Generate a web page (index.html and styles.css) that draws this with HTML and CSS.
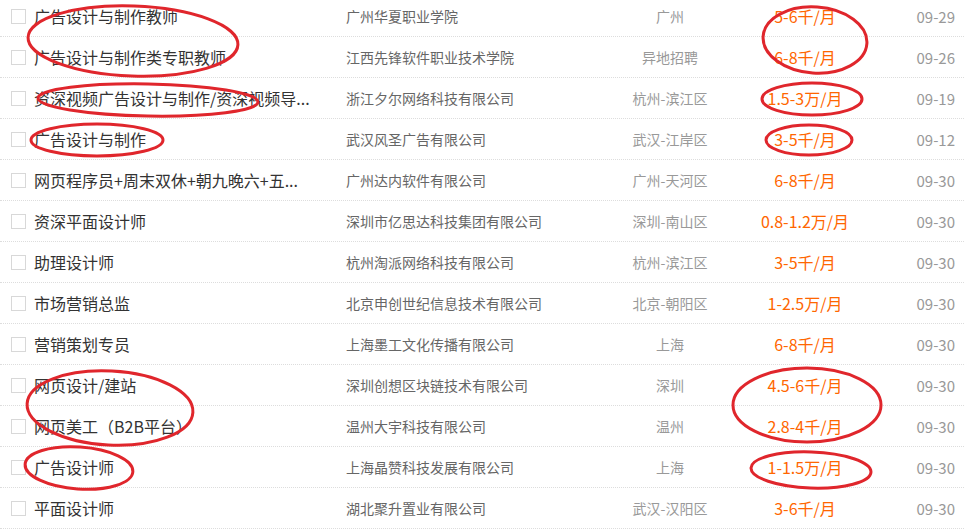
FILE: index.html
```html
<!DOCTYPE html>
<html lang="zh-CN">
<head>
    <meta charset="UTF-8">
    <title>职位列表</title>
    <link rel="stylesheet" href="styles.css">
</head>
<body>
    <div class="job-list">
        <div class="job-row">
            <span class="check"></span>
            <span class="job-title">广告设计与制作教师</span>
            <span class="company">广州华夏职业学院</span>
            <span class="place">广州</span>
            <span class="salary">5-6千/月</span>
            <span class="date">09-29</span>
        </div>
        <div class="job-row">
            <span class="check"></span>
            <span class="job-title">广告设计与制作类专职教师</span>
            <span class="company">江西先锋软件职业技术学院</span>
            <span class="place">异地招聘</span>
            <span class="salary">6-8千/月</span>
            <span class="date">09-26</span>
        </div>
        <div class="job-row">
            <span class="check"></span>
            <span class="job-title">资深视频广告设计与制作/资深视频导...</span>
            <span class="company">浙江夕尔网络科技有限公司</span>
            <span class="place">杭州-滨江区</span>
            <span class="salary">1.5-3万/月</span>
            <span class="date">09-19</span>
        </div>
        <div class="job-row">
            <span class="check"></span>
            <span class="job-title">广告设计与制作</span>
            <span class="company">武汉风圣广告有限公司</span>
            <span class="place">武汉-江岸区</span>
            <span class="salary">3-5千/月</span>
            <span class="date">09-12</span>
        </div>
        <div class="job-row">
            <span class="check"></span>
            <span class="job-title">网页程序员+周末双休+朝九晚六+五...</span>
            <span class="company">广州达内软件有限公司</span>
            <span class="place">广州-天河区</span>
            <span class="salary">6-8千/月</span>
            <span class="date">09-30</span>
        </div>
        <div class="job-row">
            <span class="check"></span>
            <span class="job-title">资深平面设计师</span>
            <span class="company">深圳市亿思达科技集团有限公司</span>
            <span class="place">深圳-南山区</span>
            <span class="salary">0.8-1.2万/月</span>
            <span class="date">09-30</span>
        </div>
        <div class="job-row">
            <span class="check"></span>
            <span class="job-title">助理设计师</span>
            <span class="company">杭州淘派网络科技有限公司</span>
            <span class="place">杭州-滨江区</span>
            <span class="salary">3-5千/月</span>
            <span class="date">09-30</span>
        </div>
        <div class="job-row">
            <span class="check"></span>
            <span class="job-title">市场营销总监</span>
            <span class="company">北京申创世纪信息技术有限公司</span>
            <span class="place">北京-朝阳区</span>
            <span class="salary">1-2.5万/月</span>
            <span class="date">09-30</span>
        </div>
        <div class="job-row">
            <span class="check"></span>
            <span class="job-title">营销策划专员</span>
            <span class="company">上海墨工文化传播有限公司</span>
            <span class="place">上海</span>
            <span class="salary">6-8千/月</span>
            <span class="date">09-30</span>
        </div>
        <div class="job-row">
            <span class="check"></span>
            <span class="job-title">网页设计/建站</span>
            <span class="company">深圳创想区块链技术有限公司</span>
            <span class="place">深圳</span>
            <span class="salary">4.5-6千/月</span>
            <span class="date">09-30</span>
        </div>
        <div class="job-row">
            <span class="check"></span>
            <span class="job-title">网页美工（B2B平台）</span>
            <span class="company">温州大宇科技有限公司</span>
            <span class="place">温州</span>
            <span class="salary">2.8-4千/月</span>
            <span class="date">09-30</span>
        </div>
        <div class="job-row">
            <span class="check"></span>
            <span class="job-title">广告设计师</span>
            <span class="company">上海晶赞科技发展有限公司</span>
            <span class="place">上海</span>
            <span class="salary">1-1.5万/月</span>
            <span class="date">09-30</span>
        </div>
        <div class="job-row">
            <span class="check"></span>
            <span class="job-title">平面设计师</span>
            <span class="company">湖北聚升置业有限公司</span>
            <span class="place">武汉-汉阳区</span>
            <span class="salary">3-6千/月</span>
            <span class="date">09-30</span>
        </div>
    </div>

    <!-- 手绘圈注 -->
    <svg class="marks" width="964" height="530" viewBox="0 0 964 530">
        <g fill="none" stroke="#e0262c" stroke-width="3">
            <ellipse cx="133" cy="41" rx="105" ry="35" transform="rotate(2 133 41)"/>
            <ellipse cx="148" cy="100" rx="110" ry="16" transform="rotate(1 148 100)"/>
            <ellipse cx="97" cy="140" rx="66" ry="16"/>
            <ellipse cx="815" cy="40" rx="52" ry="33" transform="rotate(4 815 40)"/>
            <ellipse cx="812" cy="99" rx="50" ry="16"/>
            <ellipse cx="809" cy="140" rx="43" ry="15"/>
            <ellipse cx="110" cy="408" rx="83" ry="37" transform="rotate(3 110 408)"/>
            <ellipse cx="79" cy="468" rx="54" ry="21" transform="rotate(4 79 468)"/>
            <ellipse cx="807" cy="405" rx="74" ry="37"/>
            <ellipse cx="811" cy="470" rx="60" ry="18" transform="rotate(2 811 470)"/>
        </g>
    </svg>
</body>
</html>
```

FILE: styles.css
```css
body {
    margin: 0;
    background-color: #fff;
    font-family: "Noto Sans CJK SC", "Noto Sans", sans-serif;
    color: #333;
    overflow: hidden;
}
.job-list {
    margin-top: -4px;
}
.job-row {
    display: flex;
    align-items: center;
    height: 40px;
    padding: 0 9px 0 11px;
    border-bottom: 1px dotted #ddd;
}
.check {
    flex: none;
    width: 13px;
    height: 13px;
    border: 1px solid #d8d8d8;
    margin-right: 8px;
}
.job-title {
    flex: none;
    width: 312px;
    font-size: 16px;
    color: #333;
    white-space: nowrap;
}
.company {
    flex: none;
    width: 254px;
    font-size: 14px;
    color: #666;
    white-space: nowrap;
}
.place {
    flex: none;
    width: 140px;
    text-align: center;
    font-size: 14px;
    color: #999;
}
.salary {
    flex: none;
    width: 130px;
    text-align: center;
    font-size: 16px;
    color: #f60;
}
.date {
    flex: 1;
    text-align: right;
    font-size: 15px;
    color: #999;
}
.marks {
    position: absolute;
    top: 0;
    left: 0;
    pointer-events: none;
}
```
